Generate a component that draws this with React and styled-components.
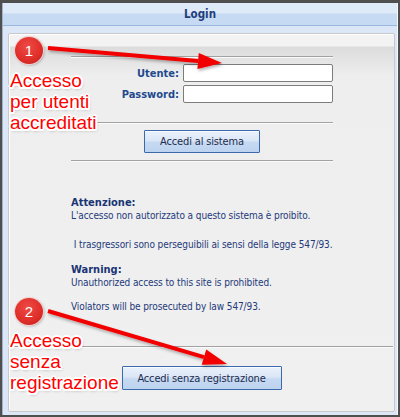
import React from "react";
import styled, { createGlobalStyle } from "styled-components";

const Global = createGlobalStyle`
  html, body { margin: 0; padding: 0; }
  body {
    background: #4f4f4f;
    font-family: "DejaVu Sans Condensed", "DejaVu Sans", sans-serif;
  }
`;

const Page = styled.div`
  position: relative;
  width: 400px;
  height: 417px;
  box-sizing: border-box;
  padding: 3px 2px 2px 2px;
  overflow: hidden;
`;

const Frame = styled.div`
  height: 100%;
  box-sizing: border-box;
  background: #dbe7f7;
  border-left: 1px solid #9fb3cc;
  border-right: 1px solid #f4f8fd;
  display: flex;
  flex-direction: column;
`;

const Header = styled.div`
  height: 22px;
  flex: none;
  background: linear-gradient(#dfeaf9 0, #dfeaf9 45%, #c6daf3 50%, #c6daf3 100%);
  border-bottom: 1px solid #98b8e2;
  display: flex;
  align-items: center;
  justify-content: center;
  font-weight: bold;
  font-size: 11.5px;
  color: #1f3f7c;
`;

const Body = styled.div`
  flex: 1;
  padding: 7px 2px 3px 5px;
  display: flex;
`;

const Panel = styled.div`
  flex: 1;
  box-sizing: border-box;
  border: 1px solid #c9c9c9;
  box-shadow: inset 1px 1px 0 #ffffff;
  border-radius: 2px;
  background: linear-gradient(#f3f3f3 0, #f3f3f3 12px, #dcdcdc 13px, #eeeeee 42px, #f0f0f0 100%);
  display: flex;
  flex-direction: column;
`;

const Block = styled.div`
  width: 262px;
  margin: ${(p) => p.$top || 0}px auto 0;
  padding-left: 1px;
`;

const Rule = styled.div`
  height: 0;
  border-top: 1px solid #a2a2a2;
  border-bottom: 1px solid #fbfbfb;
  margin: ${(p) => p.$m || "0"};
`;

const Fields = styled.div`
  padding-top: 6px;
`;

const Row = styled.div`
  display: flex;
  align-items: center;
  justify-content: flex-end;
  gap: 4px;
  margin-bottom: 3px;
`;

const Label = styled.label`
  font-weight: bold;
  font-size: 11px;
  color: #1f4a8e;
`;

const Input = styled.input`
  width: 150px;
  height: 18px;
  box-sizing: border-box;
  border: 1px solid #7c7c7c;
  border-radius: 2px;
  background: #fff;
  padding: 0 3px;
  margin: 0;
`;

const Center = styled.div`
  display: flex;
  justify-content: center;
`;

const Button = styled.button`
  width: ${(p) => p.$w}px;
  height: ${(p) => p.$h}px;
  box-sizing: border-box;
  border: 1px solid #3b69ac;
  border-radius: 1px;
  background: linear-gradient(#eaf1fb 0, #dbe7f7 45%, #c5d9f1 55%, #bdd3ef 100%);
  box-shadow: inset 0 1px 0 #f8fbff;
  font-family: "DejaVu Sans Condensed", sans-serif;
  font-size: 11px;
  letter-spacing: -0.15px;
  color: #1d2b4e;
  padding: 0;
  cursor: pointer;
`;

const Notice = styled.div`
  font-size: 10px;
  letter-spacing: -0.1px;
  line-height: 13px;
  color: #24397a;
  white-space: nowrap;
  margin-top: 34px;
`;

const Strong = styled.div`
  font-weight: bold;
  color: #1a3575;
  font-size: 11px;
  letter-spacing: 0;
  margin-top: ${(p) => p.$gap || 0}px;
`;

const Line = styled.div`
  margin-top: ${(p) => p.$gap || 0}px;
`;

const Overlay = styled.svg`
  position: absolute;
  left: 0;
  top: 0;
  pointer-events: none;
`;

const Callout = styled.div`
  position: absolute;
  left: ${(p) => p.$x}px;
  top: ${(p) => p.$y}px;
  font-family: "Liberation Sans", Arial, sans-serif;
  font-size: 19px;
  line-height: 21px;
  color: #ff0000;
  text-shadow:
    -1.5px -1.5px 0 #fff, 1.5px -1.5px 0 #fff, -1.5px 1.5px 0 #fff, 1.5px 1.5px 0 #fff,
    0 -2px 0 #fff, 0 2px 0 #fff, -2px 0 0 #fff, 2px 0 0 #fff,
    1px 2px 3px rgba(0, 0, 0, 0.35);
`;

const Badge = styled.div`
  position: absolute;
  left: ${(p) => p.$x - 14}px;
  top: ${(p) => p.$y - 13}px;
  width: 28px;
  height: 27px;
  border-radius: 50%;
  background: radial-gradient(circle at 45% 35%, #ee4a45 0, #e0302b 55%, #c21b18 100%);
  box-shadow: 0 0 0 1px #f6d0d0, 1px 1px 3px rgba(0, 0, 0, 0.35);
  display: flex;
  align-items: center;
  justify-content: center;
  color: #fff;
  font-family: "Liberation Sans", Arial, sans-serif;
  font-size: 15px;
`;

const arrows = [
  { x1: 48, y1: 48, tip: [222, 63], w: 16 },
  { x1: 48, y1: 311, tip: [227, 364], w: 16 },
];

function Arrow({ x1, y1, tip, w }) {
  const dx = tip[0] - x1;
  const dy = tip[1] - y1;
  const len = Math.hypot(dx, dy);
  const nx = -dy / len;
  const ny = dx / len;
  const bx = tip[0] - (dx / len) * 24;
  const by = tip[1] - (dy / len) * 24;
  const pts = [
    [tip[0], tip[1]],
    [bx + (nx * w) / 2, by + (ny * w) / 2],
    [bx - (nx * w) / 2, by - (ny * w) / 2],
  ]
    .map((p) => p.join(","))
    .join(" ");
  return (
    <g filter="url(#soft)">
      <line x1={x1} y1={y1} x2={bx} y2={by} stroke="#f20000" strokeWidth="4" />
      <polygon points={pts} fill="#f20000" />
    </g>
  );
}

export default function App() {
  return (
    <>
      <Global />
      <Page>
        <Frame>
          <Header>Login</Header>
          <Body>
            <Panel>
              <Block $top={22}>
                <Rule />
                <Fields>
                  <Row>
                    <Label>Utente:</Label>
                    <Input type="text" />
                  </Row>
                  <Row>
                    <Label>Password:</Label>
                    <Input type="password" />
                  </Row>
                </Fields>
                <Rule $m="19px 0 6px" />
                <Center>
                  <Button $w={116} $h={23}>Accedi al sistema</Button>
                </Center>
                <Rule $m="7px 0 0" />
                <Notice>
                  <Strong>Attenzione:</Strong>
                  <Line>L'accesso non autorizzato a questo sistema è proibito.</Line>
                  <Line $gap={16}>&nbsp;I trasgressori sono perseguibili ai sensi della legge 547/93.</Line>
                  <Strong $gap={12}>Warning:</Strong>
                  <Line>Unauthorized access to this site is prohibited.</Line>
                  <Line $gap={11}>Violators will be prosecuted by law 547/93.</Line>
                </Notice>
              </Block>
              <Rule $m="33px 1px 18px" />
              <Center>
                <Button $w={160} $h={24}>Accedi senza registrazione</Button>
              </Center>
            </Panel>
          </Body>
        </Frame>

        <Overlay width="400" height="417" viewBox="0 0 400 417">
          <defs>
            <filter id="soft" x="-10%" y="-50%" width="120%" height="200%">
              <feDropShadow dx="1" dy="2" stdDeviation="1.5" floodColor="#000" floodOpacity="0.3" />
            </filter>
          </defs>
          {arrows.map((a, i) => (
            <Arrow key={i} {...a} />
          ))}
        </Overlay>
        <Badge $x={29} $y={50}>1</Badge>
        <Badge $x={29} $y={311}>2</Badge>
        <Callout $x={10} $y={70}>
          Accesso
          <br />
          per utenti
          <br />
          accreditati
        </Callout>
        <Callout $x={10} $y={330}>
          Accesso
          <br />
          senza
          <br />
          registrazione
        </Callout>
      </Page>
    </>
  );
}
